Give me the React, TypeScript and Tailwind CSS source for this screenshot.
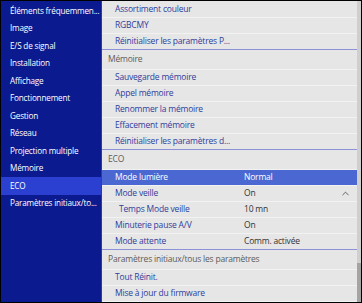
import { ChevronUp } from "lucide-react";
import clsx from "clsx";

type Row =
  | { kind: "item"; label: string; value?: string; indent?: boolean; active?: boolean; chevron?: boolean; end?: boolean }
  | { kind: "header"; label: string };

const MENU = [
  "Éléments fréquemmen...",
  "Image",
  "E/S de signal",
  "Installation",
  "Affichage",
  "Fonctionnement",
  "Gestion",
  "Réseau",
  "Projection multiple",
  "Mémoire",
  "ECO",
  "Paramètres initiaux/to...",
];

const ROWS: Row[] = [
  { kind: "item", label: "Assortiment couleur" },
  { kind: "item", label: "RGBCMY" },
  { kind: "item", label: "Réinitialiser les paramètres P...", end: true },
  { kind: "header", label: "Mémoire" },
  { kind: "item", label: "Sauvegarde mémoire" },
  { kind: "item", label: "Appel mémoire" },
  { kind: "item", label: "Renommer la mémoire" },
  { kind: "item", label: "Effacement mémoire" },
  { kind: "item", label: "Réinitialiser les paramètres d...", end: true },
  { kind: "header", label: "ECO" },
  { kind: "item", label: "Mode lumière", value: "Normal", active: true },
  { kind: "item", label: "Mode veille", value: "On", chevron: true },
  { kind: "item", label: "Temps Mode veille", value: "10 mn", indent: true },
  { kind: "item", label: "Minuterie pause A/V", value: "On" },
  { kind: "item", label: "Mode attente", value: "Comm. activée", end: true },
  { kind: "header", label: "Paramètres initiaux/tous les paramètres" },
  { kind: "item", label: "Tout Réinit." },
  { kind: "item", label: "Mise à jour du firmware" },
];

export default function App() {
  return (
    <div
      className="w-[362px] h-[303px] bg-black p-[1px] flex text-[8.5px] tracking-[-0.2px]"
      style={{ fontFamily: '"Open Sans", "Noto Sans", sans-serif' }}
    >
      {/* left menu */}
      <div className="w-[100px] bg-[#0b1a8f] pt-[1px] flex flex-col shrink-0 text-[8.2px]">
        {MENU.map((m) => (
          <div
            key={m}
            className={clsx(
              "h-[17.5px] pl-[9px] flex items-center text-white whitespace-nowrap",
              m === "ECO" && "bg-[#2b3fd0]"
            )}
          >
            {m}
          </div>
        ))}
      </div>

      <div className="w-[1px] bg-[#3a3f70] shrink-0" />

      {/* right list */}
      <div className="flex-1 flex bg-[#e6e6e6]">
        <div className="flex-1 flex flex-col pt-[1px]">
          {ROWS.map((r, i) =>
            r.kind === "header" ? (
              <div
                key={i}
                className="h-[20px] pl-[6px] flex items-center text-[#5c5c5c] border-b border-[#f2f2f2]"
              >
                {r.label}
              </div>
            ) : (
              <div
                key={i}
                className={clsx(
                  "h-[16px] flex items-center border-b whitespace-nowrap",
                  r.end ? "border-[#8c91d8]" : "border-[#f2f2f2]",
                  r.active ? "bg-[#4a67d2] text-white" : "text-[#2f3d9c]"
                )}
              >
                <span className={clsx("w-[142px] shrink-0", r.indent ? "pl-[17px]" : "pl-[13px]")}>{r.label}</span>
                {r.value && (
                  <span className={clsx("flex-1", r.active ? "text-white" : "text-[#333333]")}>{r.value}</span>
                )}
                {r.chevron && <ChevronUp size={11} strokeWidth={1.6} className="mr-[6px] text-[#333]" />}
              </div>
            )
          )}
        </div>
        {/* scrollbar */}
        <div className="w-[4px] bg-[#cfcfcf] flex flex-col justify-end">
          <div className="h-[39px] bg-[#a4a4a4]" />
        </div>
      </div>
    </div>
  );
}
